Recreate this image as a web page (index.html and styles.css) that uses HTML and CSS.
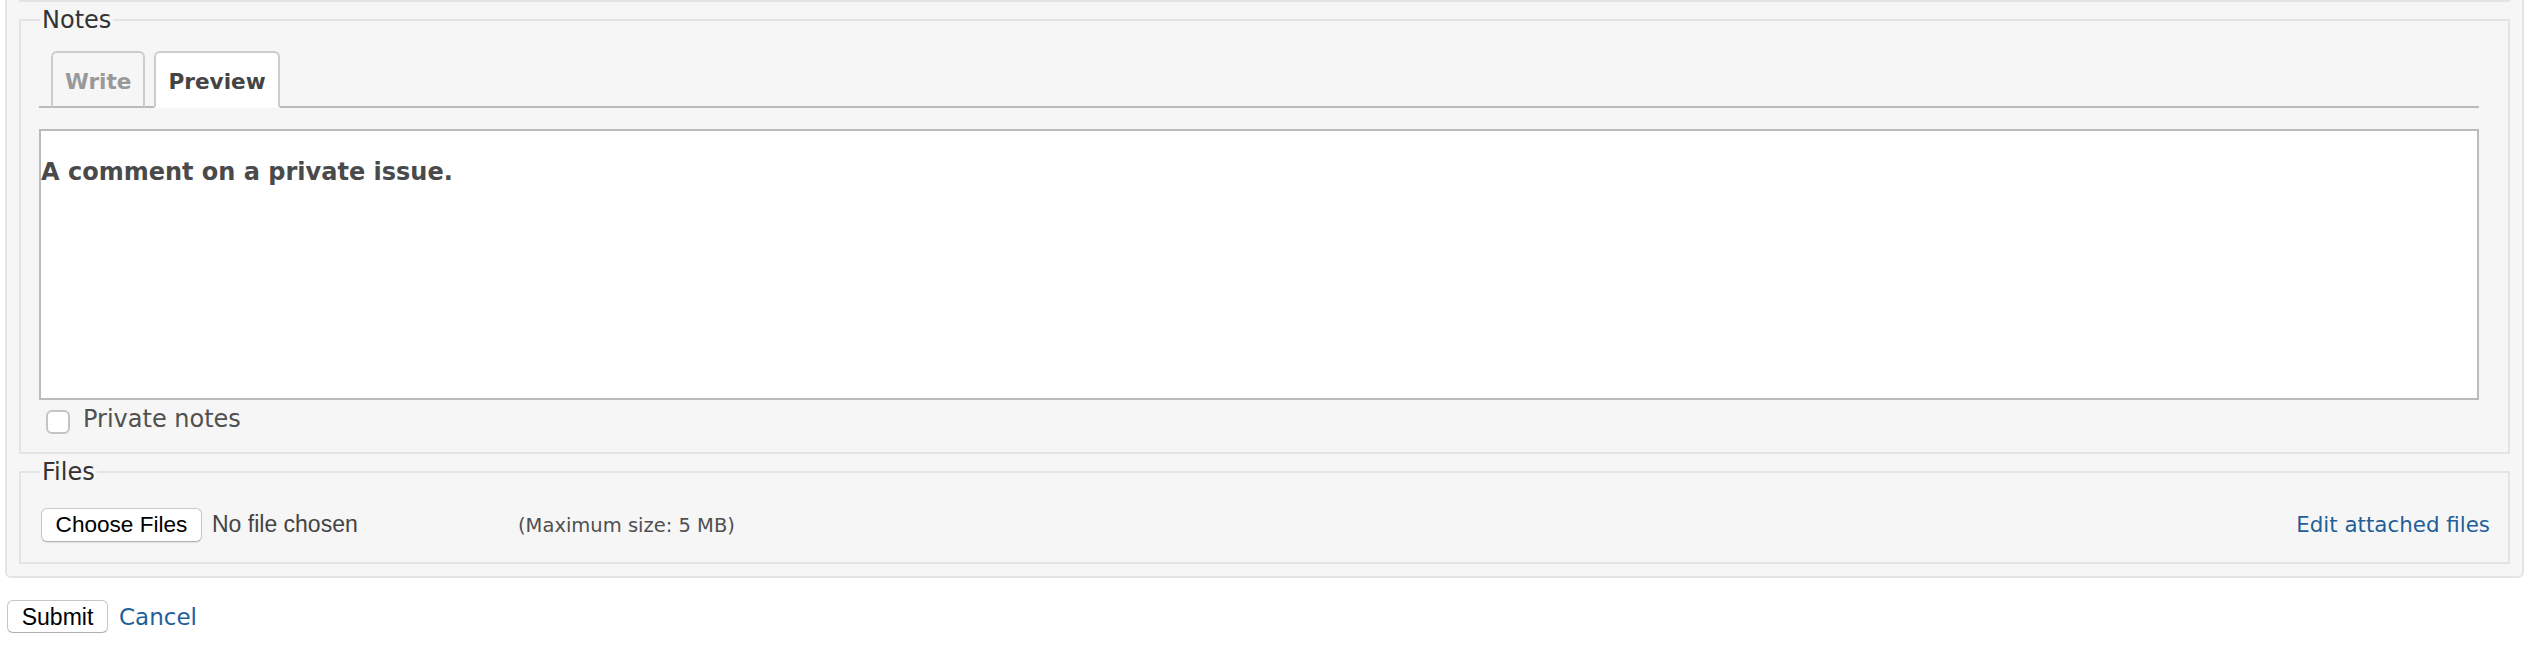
FILE: index.html
```html
<!DOCTYPE html>
<html>
<head>
<meta charset="utf-8">
<link rel="stylesheet" href="styles.css">
</head>
<body>
<div class="page">
  <div class="box">
    <div class="prev-fieldset"></div>
    <fieldset class="fs notes">
      <legend>Notes</legend>
      <div class="editor">
        <ul class="tabs">
          <li><a class="tab" href="#">Write</a></li>
          <li><a class="tab selected" href="#">Preview</a></li>
        </ul>
        <div class="preview"><p>A comment on a private issue.</p></div>
      </div>
      <label class="private"><input type="checkbox" class="check">Private notes</label>
    </fieldset>
    <fieldset class="fs files">
      <legend>Files</legend>
      <div class="files-row">
        <span class="file-input"><button type="button" class="btn choose">Choose Files</button><span class="no-file">No file chosen</span></span>
        <span class="info">(Maximum size: 5 MB)</span>
        <a class="edit-link" href="#">Edit attached files</a>
      </div>
    </fieldset>
  </div>
  <div class="actions">
    <button type="button" class="btn submit">Submit</button>
    <a href="#" class="cancel">Cancel</a>
  </div>
</div>
</body>
</html>
```
FILE: styles.css
```css
html, body {
  margin: 0;
  padding: 0;
  background: #fff;
}
body {
  font-family: "DejaVu Sans", Verdana, sans-serif;
  font-size: 24px;
  color: #333;
}
a { text-decoration: none; color: #1f5f99; }

.page {
  padding: 0 18px 0 5px;
}
.box {
  margin-top: -32px;
  background: #f6f6f6;
  border: 2px solid #e4e4e4;
  border-radius: 6px;
  padding: 12px;
  color: #505050;
  line-height: 36px;
}
.prev-fieldset {
  height: 20px;
  box-sizing: border-box;
  border: 2px solid #e4e4e4;
  border-top: none;
}
.fs {
  margin: 0;
  min-width: 0;
  border: 2px solid #e4e4e4;
  padding: 0 18px 16px;
}
.notes { padding-bottom: 15px; }
.fs legend {
  padding: 0 2px;
  margin-left: 1px;
  color: #333;
  font-size: 24px;
  line-height: 36px;
}

.tabs {
  list-style: none;
  margin: 13px 11px 0 0;
  padding: 0 0 0 12px;
  display: flex;
  gap: 9px;
  border-bottom: 2px solid #bbb;
}
.tabs li { margin: 0; padding: 0; }
.tab {
  display: block;
  padding: 5px 12px 0;
  line-height: 48px;
  font-size: 21.6px;
  font-weight: bold;
  color: #999;
  background: #f6f6f6;
  border: 2px solid #ccc;
  border-bottom-color: #bbb;
  border-radius: 6px 6px 0 0;
  margin-bottom: -2px;
}
.tab.selected {
  background: #fff;
  color: #444;
  border-bottom-color: #fff;
}
.preview {
  margin: 21px 11px 0 0;
  height: 271px;
  box-sizing: border-box;
  border: 2px solid #bbb;
  background: #fff;
  padding: 23px 0 0;
}
.preview p {
  margin: 0;
  font-weight: bold;
  color: #4a4a4a;
}

.private {
  display: flex;
  align-items: flex-start;
  line-height: 36px;
  padding-top: 1px;
  color: #505050;
}
.check {
  appearance: none;
  -webkit-appearance: none;
  width: 24px;
  height: 24px;
  box-sizing: border-box;
  margin: 8.5px 13px 0 7px;
  border: 2px solid #c4c4c4;
  border-radius: 6px;
  background: #fff;
}

.files-row {
  display: flex;
  align-items: baseline;
  margin-top: 18px;
  line-height: 24px;
  padding-bottom: 4px;
}
.file-input {
  display: inline-flex;
  align-items: baseline;
  width: 470px;
  margin-left: 2px;
}
.btn {
  font-family: "Liberation Sans", Arial, sans-serif;
  font-size: 23px;
  color: #000;
  background: #fff;
  border: 1px solid #c6c6c6;
  border-bottom-color: #b0b0b0;
  border-radius: 6px;
  box-shadow: 0 1px 1px rgba(0,0,0,0.08);
  height: 34px;
  box-sizing: border-box;
  padding: 0;
  line-height: 32px;
}
.choose {
  width: 161px;
  font-size: 22.6px;
}
.no-file {
  font-family: "Liberation Sans", Arial, sans-serif;
  font-size: 23px;
  color: #444;
  margin-left: 10px;
}
.info {
  font-size: 19.5px;
  color: #505050;
  margin-left: 7px;
}
.edit-link {
  margin-left: auto;
  font-size: 21.4px;
}

.actions {
  display: flex;
  align-items: baseline;
  margin-top: 22px;
}
.submit {
  width: 101px;
  height: 33px;
  margin-left: 2px;
}
.cancel {
  margin-left: 11px;
  font-size: 23px;
}
```
